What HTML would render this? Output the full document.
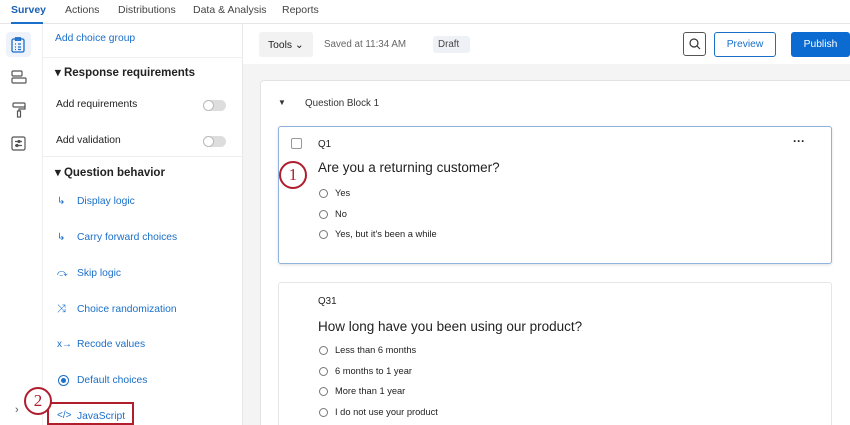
<!DOCTYPE html>
<html><head><style>
*{margin:0;padding:0;box-sizing:border-box}
html,body{width:850px;height:425px;overflow:hidden}
body{font-family:"Liberation Sans",sans-serif;background:#f4f4f5;position:relative;color:#222}
.a{position:absolute}
.nav{left:0;top:0;width:850px;height:24px;background:#fff;border-bottom:1px solid #e6e6e6}
.nav span{position:absolute;top:4px;font-size:10.5px;color:#444}
.rail{left:0;top:24px;width:42px;height:401px;background:#fff}
.side{left:42px;top:24px;width:201px;height:401px;background:#fff;border-left:1px solid #eee;border-right:1px solid #e8e8e8}
.lnk{position:absolute;left:34px;font-size:10.3px;color:#1a6fc9}
.ico{position:absolute;left:14px}
.tb{left:243px;top:24px;width:607px;height:40px;background:#fff}
.tog{position:absolute;left:160px;width:23px;height:11px;border-radius:6px;background:#ddd}
.tog:after{content:"";position:absolute;left:0;top:0;width:11px;height:11px;border-radius:50%;background:#fff;border:1px solid #bbb;box-sizing:border-box}
.rad{position:absolute;left:40px;width:9px;height:9px;border:1px solid #777;border-radius:50%}
.opt{position:absolute;left:56px;font-size:9.3px;color:#222}
</style></head><body>
<div class="a nav">
<span style="left:11px;color:#1a5fb4;font-weight:bold">Survey</span>
<div class="a" style="left:11px;top:22px;width:32px;height:2px;background:#1a6fc9"></div>
<span style="left:65px">Actions</span><span style="left:118px">Distributions</span><span style="left:193px">Data &amp; Analysis</span><span style="left:282px">Reports</span>
</div>
<div class="a rail">
<div class="a" style="left:6px;top:8px;width:25px;height:25px;background:#eef3fb;border-radius:4px"></div>
<svg class="a" style="left:11px;top:13px" width="14" height="16" viewBox="0 0 14 16" fill="none" stroke="#1a6fc9" stroke-width="1.3"><rect x="1" y="2" width="12" height="13" rx="1.5"/><rect x="4.5" y="0.8" width="5" height="2.5"/><path d="M4 7h1M7 7h3M4 10h1M7 10h3M4 12.5h1M7 12.5h3"/></svg>
<svg class="a" style="left:11px;top:46px" width="16" height="14" viewBox="0 0 16 14" fill="none" stroke="#555" stroke-width="1.2"><rect x="1" y="1" width="10" height="5" rx="1"/><rect x="1" y="8" width="14" height="5" rx="1"/></svg>
<svg class="a" style="left:12px;top:78px" width="14" height="16" viewBox="0 0 14 16" fill="none" stroke="#555" stroke-width="1.2"><rect x="1" y="1" width="12" height="4" rx="1"/><path d="M13 3v4H7v2"/><rect x="5.5" y="9" width="3" height="6"/></svg>
<svg class="a" style="left:11px;top:112px" width="15" height="15" viewBox="0 0 15 15" fill="none" stroke="#555" stroke-width="1.2"><rect x="1" y="1" width="13" height="13" rx="1.5"/><path d="M4 5.5h7M4 9.5h7"/><circle cx="8" cy="5.5" r="1"/><circle cx="6" cy="9.5" r="1"/></svg>
<div class="a" style="left:15px;top:380px;font-size:11px;color:#555">›</div>
</div>
<div class="a side">
<div class="lnk" style="left:12px;top:9px">Add choice group</div>
<div class="a" style="left:0;top:33px;width:200px;border-top:1px solid #eee"></div>
<div class="a" style="left:12px;top:41px;font-size:11.5px;font-weight:bold;color:#222">▾ Response requirements</div>
<div class="a" style="left:13px;top:75px;font-size:10.3px">Add requirements</div><div class="tog" style="top:76px"></div>
<div class="a" style="left:13px;top:111px;font-size:10.3px">Add validation</div><div class="tog" style="top:112px"></div>
<div class="a" style="left:0;top:132px;width:200px;border-top:1px solid #eee"></div>
<div class="a" style="left:12px;top:141px;font-size:11.5px;font-weight:bold;color:#222">▾ Question behavior</div>
<div class="ico" style="top:172px;color:#1a6fc9;font-size:10px">↳</div><div class="lnk" style="top:172px">Display logic</div>
<div class="ico" style="top:208px;color:#1a6fc9;font-size:10px">↳</div><div class="lnk" style="top:208px">Carry forward choices</div>
<div class="ico" style="top:244px;color:#1a6fc9;font-size:10px">⤼</div><div class="lnk" style="top:244px">Skip logic</div>
<div class="ico" style="top:279px;color:#1a6fc9;font-size:11px">⤨</div><div class="lnk" style="top:280px">Choice randomization</div>
<div class="ico" style="top:315px;color:#1a6fc9;font-size:10px">x→</div><div class="lnk" style="top:315px">Recode values</div>
<div class="a" style="left:15px;top:351px;width:11px;height:11px;border:1.5px solid #1a6fc9;border-radius:50%"><div class="a" style="left:1.5px;top:1.5px;width:5px;height:5px;background:#1a6fc9;border-radius:50%"></div></div>
<div class="lnk" style="top:351px">Default choices</div>
<div class="ico" style="top:386px;color:#1a6fc9;font-size:10px">&lt;/&gt;</div><div class="lnk" style="top:387px">JavaScript</div>
</div>
<div class="a" style="left:47px;top:402px;width:87px;height:23px;border:2px solid #b01e2e"></div>
<div class="a" style="left:24px;top:387px;width:28px;height:28px;border:2px solid #b01e2e;border-radius:50%;background:#fff;font-size:17px;text-align:center;line-height:24px;color:#b01e2e;font-family:'Liberation Serif',serif">2</div>
<div class="a tb">
<div class="a" style="left:16px;top:8px;width:54px;height:25px;background:#f2f2f3;border-radius:3px;font-size:10.3px;padding:7px 9px">Tools ⌄</div>
<div class="a" style="left:81px;top:15px;font-size:9.8px;color:#666">Saved at 11:34 AM</div>
<div class="a" style="left:190px;top:12px;width:37px;height:17px;background:#eef1f6;border-radius:3px;font-size:9.8px;padding:3px 5px;color:#444">Draft</div>
<div class="a" style="left:440px;top:8px;width:23px;height:24px;border:1px solid #555;border-radius:3px"><svg width="21" height="22" viewBox="0 0 21 22" fill="none" stroke="#333" stroke-width="1.2"><circle cx="10" cy="10" r="4"/><path d="M13 13l3 3"/></svg></div>
<div class="a" style="left:471px;top:8px;width:62px;height:25px;border:1px solid #1a6fc9;border-radius:3px;font-size:10.3px;color:#1a6fc9;text-align:center;line-height:23px">Preview</div>
<div class="a" style="left:548px;top:8px;width:59px;height:25px;background:#0b6bd0;border-radius:3px;font-size:10.3px;color:#fff;text-align:center;line-height:25px">Publish</div>
</div>
<div class="a" style="left:260px;top:80px;width:600px;height:360px;background:#fff;border:1px solid #e2e2e2;border-radius:4px"></div>
<div class="a" style="left:278px;top:98px;font-size:8px;color:#333">▼</div>
<div class="a" style="left:305px;top:98px;font-size:9.8px;color:#333">Question Block 1</div>
<div class="a" style="left:278px;top:126px;width:554px;height:138px;border:1px solid #8fb3dc;border-radius:3px;box-shadow:0 1px 3px rgba(0,0,0,.12);background:#fff">
<div class="a" style="left:12px;top:11px;width:11px;height:11px;border:1px solid #999;border-radius:2px"></div>
<div class="a" style="left:39px;top:12px;font-size:9.8px">Q1</div>
<div class="a" style="left:514px;top:7px;font-size:12px;font-weight:bold">···</div>
<div class="a" style="left:39px;top:33px;font-size:13.5px">Are you a returning customer?</div>
<div class="rad" style="top:62px"></div><div class="opt" style="top:61px">Yes</div>
<div class="rad" style="top:83px"></div><div class="opt" style="top:82px">No</div>
<div class="rad" style="top:103px"></div><div class="opt" style="top:102px">Yes, but it's been a while</div>
</div>
<div class="a" style="left:279px;top:161px;width:28px;height:28px;border:2px solid #b01e2e;border-radius:50%;background:#fff;font-size:17px;text-align:center;line-height:24px;color:#b01e2e;font-family:'Liberation Serif',serif">1</div>
<div class="a" style="left:278px;top:282px;width:554px;height:160px;border:1px solid #e6e6e6;border-radius:3px;background:#fff">
<div class="a" style="left:39px;top:13px;font-size:9.8px">Q31</div>
<div class="a" style="left:39px;top:36px;font-size:13.5px">How long have you been using our product?</div>
<div class="rad" style="top:63px"></div><div class="opt" style="top:62px">Less than 6 months</div>
<div class="rad" style="top:84px"></div><div class="opt" style="top:83px">6 months to 1 year</div>
<div class="rad" style="top:104px"></div><div class="opt" style="top:103px">More than 1 year</div>
<div class="rad" style="top:125px"></div><div class="opt" style="top:124px">I do not use your product</div>
</div>
</body></html>
